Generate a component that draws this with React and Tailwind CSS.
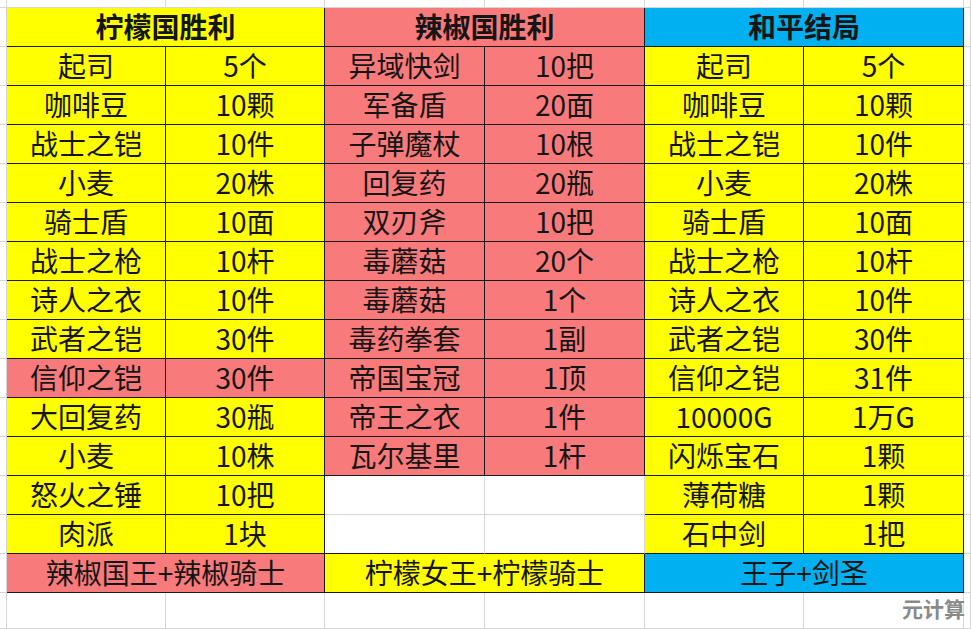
import React from 'react';

const YELLOW = 'bg-[#ffff00]';
const RED = 'bg-[#f97a7a]';
const BLUE = 'bg-[#00b0f0]';

const lemon = [
  ['起司', '5个'], ['咖啡豆', '10颗'], ['战士之铠', '10件'], ['小麦', '20株'],
  ['骑士盾', '10面'], ['战士之枪', '10杆'], ['诗人之衣', '10件'], ['武者之铠', '30件'],
  ['信仰之铠', '30件', RED], ['大回复药', '30瓶'], ['小麦', '10株'], ['怒火之锤', '10把'],
  ['肉派', '1块'],
];

const chili = [
  ['异域快剑', '10把'], ['军备盾', '20面'], ['子弹魔杖', '10根'], ['回复药', '20瓶'],
  ['双刃斧', '10把'], ['毒蘑菇', '20个'], ['毒蘑菇', '1个'], ['毒药拳套', '1副'],
  ['帝国宝冠', '1顶'], ['帝王之衣', '1件'], ['瓦尔基里', '1杆'],
];

const peace = [
  ['起司', '5个'], ['咖啡豆', '10颗'], ['战士之铠', '10件'], ['小麦', '20株'],
  ['骑士盾', '10面'], ['战士之枪', '10杆'], ['诗人之衣', '10件'], ['武者之铠', '30件'],
  ['信仰之铠', '31件'], ['10000G', '1万G'], ['闪烁宝石', '1颗'], ['薄荷糖', '1颗'],
  ['石中剑', '1把'],
];

function Blank({ dark }) {
  return (
    <div className={`border-r border-b border-r-[#d6d6d6] ${dark ? 'border-b-[#1a1a1a]' : 'border-b-[#d6d6d6]'}`} />
  );
}

function Cell({ bg, children, span, bold }) {
  return (
    <div
      className={`${span ? 'col-span-2' : ''} ${bg} flex items-center justify-center pb-[3px] border-r border-b border-[#1a1a1a] ${
        bold ? 'font-bold text-[28px]' : 'text-[28px]'
      } leading-none text-[#151515] whitespace-nowrap`}
    >
      {children}
    </div>
  );
}

function itemCells(list, i, bg) {
  const row = list[i];
  if (!row) return [<Blank key="a" dark={i === 12} />, <Blank key="b" dark={i === 12} />];
  const color = row[2] || bg;
  return [
    <Cell key="a" bg={color}>{row[0]}</Cell>,
    <Cell key="b" bg={color}>{row[1]}</Cell>,
  ];
}

export default function App() {
  const rows = [];

  // top strip of the sheet
  rows.push(
    <React.Fragment key="top">
      {Array.from({ length: 8 }).map((_, i) => <Blank key={i} />)}
    </React.Fragment>
  );

  rows.push(
    <React.Fragment key="head">
      <Blank />
      <Cell bg={YELLOW} span bold>柠檬国胜利</Cell>
      <Cell bg={RED} span bold>辣椒国胜利</Cell>
      <Cell bg={BLUE} span bold>和平结局</Cell>
      <Blank />
    </React.Fragment>
  );

  for (let i = 0; i < 13; i++) {
    rows.push(
      <React.Fragment key={'r' + i}>
        <Blank />
        {itemCells(lemon, i, YELLOW)}
        {itemCells(chili, i, RED)}
        {itemCells(peace, i, YELLOW)}
        <Blank />
      </React.Fragment>
    );
  }

  rows.push(
    <React.Fragment key="foot">
      <Blank />
      <Cell bg={RED} span>辣椒国王+辣椒骑士</Cell>
      <Cell bg={YELLOW} span>柠檬女王+柠檬骑士</Cell>
      <Cell bg={BLUE} span>王子+剑圣</Cell>
      <Blank />
    </React.Fragment>
  );

  rows.push(
    <React.Fragment key="bottom">
      {Array.from({ length: 8 }).map((_, i) => <Blank key={i} />)}
    </React.Fragment>
  );

  return (
    <div
      className="relative w-[971px] h-[629px] overflow-hidden bg-white"
      style={{ fontFamily: '"Noto Sans CJK SC", "Noto Sans", sans-serif' }}
    >
      <div className="grid grid-cols-[7px_159px_159px_160px_160px_159px_160px_7px] grid-rows-[8px_repeat(15,39px)_36px] w-full h-full">
        {rows}
      </div>
      <div className="absolute left-[902px] top-[598px] text-[21px] font-bold leading-none text-[#8a8a8a]">
        元计算
      </div>
    </div>
  );
}
